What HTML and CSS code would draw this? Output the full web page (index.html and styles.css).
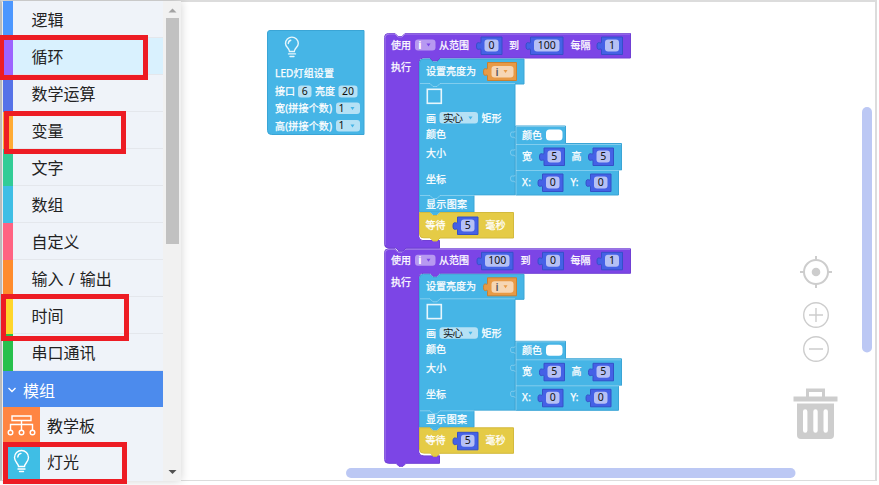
FILE: index.html
```html
<!DOCTYPE html>
<html lang="zh-CN">
<head>
<meta charset="utf-8">
<title>Blocks</title>
<link rel="stylesheet" href="styles.css">
</head>
<body>
<div class="app">
  <aside class="sidebar">
    <nav class="menu">
      <div class="item logic">逻辑</div>
      <div class="item loop active">循环</div>
      <div class="item math">数学运算</div>
      <div class="item vars">变量</div>
      <div class="item words">文字</div>
      <div class="item list">数组</div>
      <div class="item custom">自定义</div>
      <div class="item io">输入 / 输出</div>
      <div class="item time">时间</div>
      <div class="item serial">串口通讯</div>
      <div class="group"><svg width="10" height="8" viewBox="0 0 10 8"><path d="M1.5 2 5 5.5 8.5 2"/></svg>模组</div>
      <div class="module">
        <span class="icon board"><svg width="37" height="36" viewBox="0 0 37 36"><path d="M9 9h19v4.500H9zM18.500 13.500V23M7.500 23v-5.500h22V23"/><circle cx="7.500" cy="25.500" r="2.300"/><circle cx="18.500" cy="25.500" r="2.300"/><circle cx="29.500" cy="25.500" r="2.300"/></svg></span>教学板
      </div>
      <div class="module">
        <span class="icon light"><svg width="37" height="38" viewBox="0 0 37 38"><path d="M15.500 23.500c0-3-4-4.500-4-9a7 7 0 0 1 14 0c0 4.500-4 6-4 9zM14.800 14c.2-2 1.400-3.300 3.200-3.600M15 26h7M16.500 28.500h4"/></svg></span>灯光
      </div>
    </nav>
    <div class="scrollbar">
      <svg width="13" height="17" viewBox="0 0 13 17"><path class="up" d="M2.500 11.500 6.500 7.500l4 4z"/></svg>
      <div class="thumb"></div>
      <svg width="13" height="18" viewBox="0 0 13 18"><path class="down" d="M2.500 7h8l-4 4z"/></svg>
    </div>
  </aside>

  <main class="workspace">
    <svg class="canvas" width="879" height="485" viewBox="0 0 879 485">
      <!-- LED settings block -->
      <path class="blk cyan" d="M267.500 33a2.500 2.500 0 0 1 2.500-2.500H364V134.500H271.500a4 4 0 0 1-4-4z"/>
      <path class="bulb" d="M289.500 51.500c0-3.500-4-4-4-8a6.300 6.300 0 0 1 12.800 0c0 4-4 4.500-4 8zM288.300 43.500c.1-1.700 1-2.800 2.500-3.200M288.500 53.900h7M290 56.500h4"/>
      <g class="t">
        <text x="275" y="77" textLength="59">LED灯组设置</text>
        <text x="275" y="95" textLength="20">接口</text>
        <text x="315" y="95" textLength="20">亮度</text>
        <text x="275" y="112" textLength="57">宽(拼接个数)</text>
        <text x="275" y="129.500" textLength="57">高(拼接个数)</text>
      </g>
      <g class="fc">
        <rect x="298" y="85.500" width="13.500" height="12" rx="3"/>
        <rect x="338.500" y="85.500" width="19" height="12" rx="3"/>
        <rect x="336" y="102.500" width="24" height="11.500" rx="3"/>
        <rect x="336" y="120" width="24" height="11.500" rx="3"/>
      </g>
      <g class="v">
        <text x="304.700" y="95">6</text>
        <text x="348" y="95">20</text>
        <text x="341.500" y="112">1</text>
        <text x="341.500" y="129">1</text>
      </g>
      <path class="ac" d="M350.500 107h4l-2 3zM350.500 124.500h4l-2 3z"/>
      <g id="loops"></g>

      <!-- Workspace controls -->
      <rect class="bar" x="862" y="107" width="10" height="245.500" rx="5"/>
      <rect class="bar" x="346" y="468" width="449.500" height="10" rx="5"/>
      <g class="ctl">
        <circle cx="816" cy="272" r="12"/>
        <path d="M816 256v5M816 283v5M800 272h5M827 272h5"/>
        <g class="thin"><circle cx="816" cy="315" r="12.300"/><circle cx="816" cy="349" r="12.300"/><path d="M809 315h14M816 308v14M809 349h14"/></g>
      </g>
      <circle class="grey" cx="816" cy="272" r="4.300"/>
      <path class="grey" fill-rule="evenodd" d="M793.500 396.500h12.500v-8h19v8h12.500v5h-44zM809 392v4.500h13V392zM797 403.500h37V435a4 4 0 0 1-4 4h-29a4 4 0 0 1-4-4zM803 411.500v19a2.200 2.200 0 0 0 4.400 0v-19a2.200 2.200 0 0 0-4.400 0zM813.300 411.500v19a2.200 2.200 0 0 0 4.400 0v-19a2.200 2.200 0 0 0-4.400 0zM823.500 411.500v19a2.200 2.200 0 0 0 4.400 0v-19a2.200 2.200 0 0 0-4.400 0z"/>
    </svg>
  </main>
</div>
<div class="mark mark-loop"></div>
<div class="mark mark-vars"></div>
<div class="mark mark-time"></div>
<div class="mark mark-light"></div>
<script src="blocks.js"></script>
</body>
</html>
```
FILE: styles.css
```css
* { box-sizing: border-box; }
body {
  margin: 0;
  width: 879px;
  height: 485px;
  overflow: hidden;
  background: #fff;
  font-family: "Noto Sans", "Noto Sans CJK SC", sans-serif;
}
.app {
  display: flex;
  width: 877px;
  height: 481px;
  border: 1px solid #dcdcdc;
  border-top-width: 2px;
  border-right: 2px solid #dcdcdc;
  border-left: 2px solid #c8c8c8;
}
.sidebar {
  display: flex;
  width: 178px;
  margin: -1px 0 -1px 1px;
  background: #f1f1f1;
  box-shadow: 0 0 9px rgba(0, 0, 0, .18);
  overflow: visible;
  flex: none;
}
.menu {
  width: 160px;
  height: 480px;
  overflow: hidden;
  background: #eff3f9;
  font-size: 16px;
  color: #222;
}
.item {
  height: 37px;
  padding-left: 18.500px;
  border-left: 10px solid;
  line-height: 38px;
  box-shadow: inset 0 -1px #e4e7ec;
  white-space: nowrap;
}
.logic { border-left-color: #4c97ff; }
.loop { border-left-color: #9c63ff; }
.math { border-left-color: #5672e8; }
.vars { border-left-color: #ffab35; }
.words { border-left-color: #32cc96; }
.list { border-left-color: #3fbee5; }
.custom { border-left-color: #ff6382; }
.io { border-left-color: #ff8c2d; word-spacing: 1px; }
.time { border-left-color: #ffd62b; }
.serial { border-left-color: #27c04c; }
.active { background: #d9f1fe; }
.group {
  display: flex;
  align-items: center;
  gap: 6px;
  height: 36px;
  padding: 1px 0 0 4px;
  background: #4c8bed;
  color: #fff;
}
.group path { fill: none; stroke: #fff; stroke-width: 1.4; }
.module { display: flex; align-items: center; height: 36px; gap: 7px; }
.module:last-child { height: 38px; line-height: 20px; }
.icon { display: flex; height: 100%; }
.icon svg { fill: none; stroke: #fff; stroke-width: 1.4; stroke-linecap: round; }
.board { background: #ff8542; }
.light { background: #3fbee5; }
.scrollbar {
  display: flex;
  flex-direction: column;
  justify-content: space-between;
  width: 13px;
  margin-left: 3px;
}
.thumb { height: 226px; margin-bottom: auto; background: #c1c1c1; }
.scrollbar svg { flex: none; }
.up { fill: #a3a3a3; }
.down { fill: #505050; }
.workspace { flex: 1; }
.canvas { position: absolute; left: 0; top: 0; pointer-events: none; }
.blk { stroke-width: 1; }
.cyan { fill: #46b5e6; stroke: #3aa5d6; }
.purple { fill: #7c45e6; stroke: #7040d4; }
.yellow { fill: #e5cb46; stroke: #d3ba3d; }
.blue { fill: #4561e6; stroke: #3450c8; }
.orange { fill: #e89a45; stroke: #c98131; }
.hi { fill: none; stroke: rgba(255, 255, 255, .32); }
.socket { fill: none; stroke: rgba(255, 255, 255, .28); }
.fc rect { fill: #b5e1f5; }
.fp { fill: #b799f1; }
.fb { fill: #b5c0f5; }
.fo { fill: #f6d6b4; }
.white { fill: #fff; }
.ac, .cyan-tab { fill: #46b5e6; }
.ap { fill: #7c45e6; }
.ao { fill: #e89a45; }
.t { fill: #fff; font-size: 10px; stroke: #fff; stroke-width: .25px; }
.v { fill: #111; font-size: 10.500px; text-anchor: middle; }
.v .loop-var { fill: #fff; font-size: 11px; font-weight: 700; }
.v .get-var { fill: #5c5a5e; font-size: 11px; font-weight: 600; }
.bulb { fill: none; stroke: #e6f6fc; stroke-width: 1.4; stroke-linecap: round; }
.square { fill: none; stroke: #e6f6fc; stroke-width: 1.6; }
.bar { fill: #bcc8f4; }
.ctl { fill: none; stroke: #cdcdcd; stroke-width: 2; }
.thin { stroke-width: 1.400; }
.grey { fill: #cdcdcd; }
.mark { position: absolute; border: 5px solid #ed1c24; }
.mark-loop { left: -1px; top: 35px; width: 149px; height: 45px; }
.mark-vars { left: 4px; top: 111px; width: 122px; height: 43px; }
.mark-time { left: 1px; top: 294px; width: 128px; height: 47px; }
.mark-light { left: 3px; top: 442px; width: 124px; height: 42px; }
```
FILE: blocks.js
```js
const text = (x, y, s, w) => `<text x="${x}" y="${y}" textLength="${w}">${s}</text>`;

// Number block: x is the left edge of the body, y its top.
function num(x, y, w, s) {
  return `<path class="blk blue" d="M${x} ${y + .5}H${x + w - 1}V${y + 18}H${x}V${y + 13.5}c0-3-4.500 2.500-4.500-4s4.500-1 4.500-4z"/>
    <rect class="fb" x="${x + 3.5}" y="${y + 3}" width="${w - 8}" height="12" rx="3"/>
    <g class="v"><text x="${x + w / 2 - .5}" y="${y + 12.7}">${s}</text></g>`;
}

function loop(dy, header) {
  const tab = y => `<path class="socket" d="M515 ${y - 4}c0 3-4.500-1.500-4.500 3.500s4.500 1 4.500 4"/>`;
  return `<g transform="translate(0 ${dy})">
    <path class="blk purple" d="M384.500 37.500a4 4 0 0 1 4-4h6.500l3 3h4l3-3H630.500V58H440l-3 3h-4l-3-3h-7a4 4 0 0 0-4 4V236.500a4 4 0 0 0 4 4H439.500V248H406l-3 3h-4l-3-3h-7.500a4 4 0 0 1-4-4z"/>
    <path class="hi" d="M385 245V37.500a4 4 0 0 1 4-3.500h6l3 3h4l3-3H630"/>
    <path class="blk cyan" d="M419.500 63a4 4 0 0 1 4-4h6.500l3 3h4l3-3H524V84H515V195H474V212H419.500z"/>
    <path class="blk cyan" d="M515.500 126H565.500V143.500H621.500V170H618.500V195H515.500z"/>
    <path class="hi" d="M420 83.500h10l3 3h4l3-3h75M420 195.500h10l3 3h4l3-3h75M516 195V126.500h49M516 144.500h105M516 170.500h105"/>
    ${tab(135)}${tab(153)}${tab(179)}
    <path class="blk yellow" d="M419.500 212.500h10.500l3 3h4l3-3h73.500V238H440l-3 3h-4l-3-3h-6.500a4 4 0 0 1-4-4z"/>
    <path class="cyan-tab" d="M430 212h10l-3 3h-4z"/>
    <path class="white" d="M419 234a5 5 0 0 0 5 4.500h6l2 1.500h-8a5 5 0 0 1-5-5z"/>
    <rect class="fp" x="415" y="39.500" width="20.500" height="11" rx="3"/>
    <path class="ap" d="M426.500 43.500h4l-2 3z"/>
    <g class="v"><text class="loop-var" x="420" y="49">i</text></g>
    <g class="t">
      ${text(391, 48.500, '使用', 20)}${text(439, 48.500, '从范围', 30)}
      ${text(header.toX, 48.500, '到', 10)}${text(570.5, 48.500, '每隔', 20)}
      ${text(391, 70.500, '执行', 20)}${text(426, 74.500, '设置亮度为', 50)}
      ${text(426, 121.500, '画', 10)}${text(481.5, 121.500, '矩形', 20)}
      ${text(426, 138, '颜色', 20)}${text(426, 156.500, '大小', 20)}
      ${text(426, 182.500, '坐标', 20)}${text(426, 207.500, '显示图案', 41)}
      ${text(425.5, 229, '等待', 20)}${text(485.5, 229, '毫秒', 20)}
      ${text(522, 138.500, '颜色', 20)}${text(522, 160, '宽', 10)}${text(571.5, 160, '高', 10)}
      ${text(522, 185.500, 'X:', 9)}${text(570.5, 185.500, 'Y:', 8)}
    </g>
    ${num(header.a[0], 36.5, header.a[1], header.a[2])}
    ${num(header.b[0], 36.5, header.b[1], header.b[2])}
    ${num(601.5, 36.5, 22, 1)}
    <path class="blk orange" d="M487.500 62.500H516.500V80.500H487.500V76c0-3-4 2.500-4-4s4-1 4-4z"/>
    <rect class="fo" x="491.500" y="66" width="22" height="11.500" rx="3"/>
    <path class="ao" d="M503.500 70h4l-2 3z"/>
    <g class="v"><text class="get-var" x="497" y="75.500">i</text></g>
    <rect class="square" x="427.300" y="89.300" width="14" height="14"/>
    <g class="fc"><rect x="439.500" y="112" width="38.500" height="11.500" rx="3"/></g>
    <g class="v"><text x="453" y="121.500" textLength="20">实心</text></g>
    <path class="ac" d="M468.500 116.500h4l-2 3z"/>
    <rect class="white" x="546" y="129.500" width="16.500" height="11" rx="3.500"/>
    ${num(544, 147.500, 21.5, 5)}${num(593, 147.500, 21.5, 5)}
    ${num(542.5, 173.500, 21.5, 0)}${num(590.5, 173.500, 21.5, 0)}
    ${num(457.5, 216.500, 21.5, 5)}
  </g>`;
}

document.getElementById('loops').innerHTML =
  loop(215.3, { toX: 520.5, a: [481.5, 32.5, 100], b: [542.5, 22, 0] }) +
  loop(0, { toX: 509, a: [481, 22, 0], b: [530.5, 33.5, 100] });
```
